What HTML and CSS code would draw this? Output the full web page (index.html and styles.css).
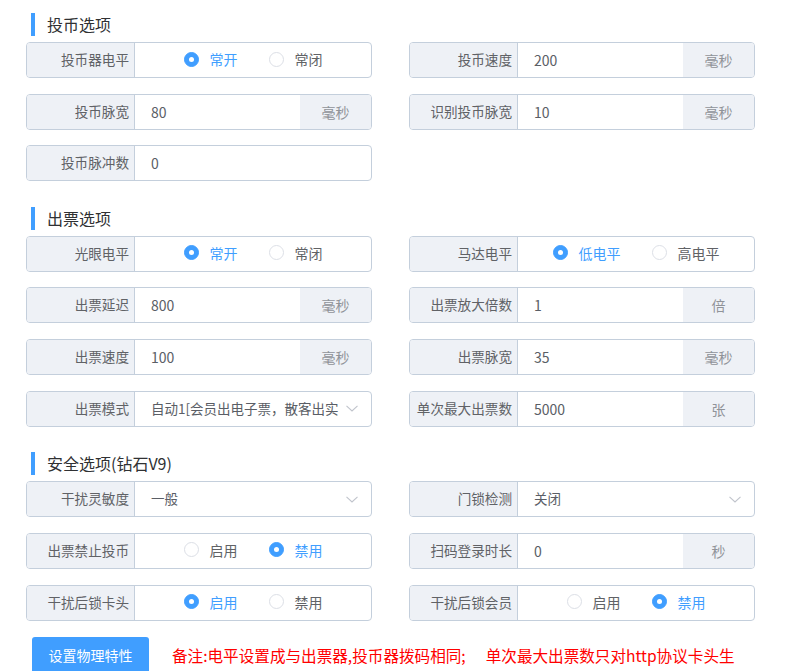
FILE: index.html
```html
<!DOCTYPE html>
<html lang="zh-CN">
<head>
<meta charset="utf-8">
<title>物理特性设置</title>
<link rel="stylesheet" href="styles.css">
</head>
<body>
<div class="page">
  <section class="group">
    <h3 class="group-title">投币选项</h3>
    <div class="grid">
      <div class="field">
        <span class="field-label">投币器电平</span>
        <div class="field-radios">
          <span class="radio is-checked"><span class="radio-dot"></span><span class="radio-text">常开</span></span>
          <span class="radio"><span class="radio-dot"></span><span class="radio-text">常闭</span></span>
        </div>
      </div>
      <div class="field">
        <span class="field-label">投币速度</span>
        <span class="field-value">200</span>
        <span class="field-suffix">毫秒</span>
      </div>
      <div class="field">
        <span class="field-label">投币脉宽</span>
        <span class="field-value">80</span>
        <span class="field-suffix">毫秒</span>
      </div>
      <div class="field">
        <span class="field-label">识别投币脉宽</span>
        <span class="field-value">10</span>
        <span class="field-suffix">毫秒</span>
      </div>
      <div class="field">
        <span class="field-label">投币脉冲数</span>
        <span class="field-value">0</span>
      </div>
    </div>
  </section>

  <section class="group">
    <h3 class="group-title">出票选项</h3>
    <div class="grid">
      <div class="field">
        <span class="field-label">光眼电平</span>
        <div class="field-radios">
          <span class="radio is-checked"><span class="radio-dot"></span><span class="radio-text">常开</span></span>
          <span class="radio"><span class="radio-dot"></span><span class="radio-text">常闭</span></span>
        </div>
      </div>
      <div class="field">
        <span class="field-label">马达电平</span>
        <div class="field-radios">
          <span class="radio is-checked"><span class="radio-dot"></span><span class="radio-text">低电平</span></span>
          <span class="radio"><span class="radio-dot"></span><span class="radio-text">高电平</span></span>
        </div>
      </div>
      <div class="field">
        <span class="field-label">出票延迟</span>
        <span class="field-value">800</span>
        <span class="field-suffix">毫秒</span>
      </div>
      <div class="field">
        <span class="field-label">出票放大倍数</span>
        <span class="field-value">1</span>
        <span class="field-suffix">倍</span>
      </div>
      <div class="field">
        <span class="field-label">出票速度</span>
        <span class="field-value">100</span>
        <span class="field-suffix">毫秒</span>
      </div>
      <div class="field">
        <span class="field-label">出票脉宽</span>
        <span class="field-value">35</span>
        <span class="field-suffix">毫秒</span>
      </div>
      <div class="field">
        <span class="field-label">出票模式</span>
        <div class="field-select">
          <span class="select-text">自动1[会员出电子票，散客出实</span>
          <svg class="select-arrow" width="12" height="7" viewBox="0 0 12 7"><path d="M0.5 0.8 L6 6 L11.5 0.8" fill="none" stroke="#c0c4cc" stroke-width="1.1"/></svg>
        </div>
      </div>
      <div class="field">
        <span class="field-label">单次最大出票数</span>
        <span class="field-value">5000</span>
        <span class="field-suffix">张</span>
      </div>
    </div>
  </section>

  <section class="group">
    <h3 class="group-title">安全选项(钻石V9)</h3>
    <div class="grid">
      <div class="field">
        <span class="field-label">干扰灵敏度</span>
        <div class="field-select">
          <span class="select-text">一般</span>
          <svg class="select-arrow" width="12" height="7" viewBox="0 0 12 7"><path d="M0.5 0.8 L6 6 L11.5 0.8" fill="none" stroke="#c0c4cc" stroke-width="1.1"/></svg>
        </div>
      </div>
      <div class="field">
        <span class="field-label">门锁检测</span>
        <div class="field-select">
          <span class="select-text">关闭</span>
          <svg class="select-arrow" width="12" height="7" viewBox="0 0 12 7"><path d="M0.5 0.8 L6 6 L11.5 0.8" fill="none" stroke="#c0c4cc" stroke-width="1.1"/></svg>
        </div>
      </div>
      <div class="field">
        <span class="field-label">出票禁止投币</span>
        <div class="field-radios">
          <span class="radio"><span class="radio-dot"></span><span class="radio-text">启用</span></span>
          <span class="radio is-checked"><span class="radio-dot"></span><span class="radio-text">禁用</span></span>
        </div>
      </div>
      <div class="field">
        <span class="field-label">扫码登录时长</span>
        <span class="field-value">0</span>
        <span class="field-suffix">秒</span>
      </div>
      <div class="field">
        <span class="field-label">干扰后锁卡头</span>
        <div class="field-radios">
          <span class="radio is-checked"><span class="radio-dot"></span><span class="radio-text">启用</span></span>
          <span class="radio"><span class="radio-dot"></span><span class="radio-text">禁用</span></span>
        </div>
      </div>
      <div class="field">
        <span class="field-label">干扰后锁会员</span>
        <div class="field-radios">
          <span class="radio"><span class="radio-dot"></span><span class="radio-text">启用</span></span>
          <span class="radio is-checked"><span class="radio-dot"></span><span class="radio-text">禁用</span></span>
        </div>
      </div>
    </div>
  </section>

  <div class="footer">
    <button class="btn-primary" type="button">设置物理特性</button>
    <p class="note"><span class="note-first">备注:电平设置成与出票器,投币器拨码相同;</span><span class="note-second">单次最大出票数只对http协议卡头生</span></p>
  </div>
</div>
</body>
</html>
```
FILE: styles.css
```css
* {
  box-sizing: border-box;
}

html, body {
  margin: 0;
  padding: 0;
  background: #ffffff;
}

body {
  font-family: "Noto Sans CJK SC", "Noto Sans", sans-serif;
  color: #606266;
  overflow: hidden;
}

.page {
  padding: 13px 0 0 26px;
  width: 787px;
}

.group {
  margin-bottom: 25.5px;
}

.group:last-of-type {
  margin-bottom: 0;
}

.group-title {
  margin: 0 0 6px 5px;
  height: 23px;
  line-height: 23px;
  border-left: 4px solid #409eff;
  padding-left: 12px;
  font-size: 16px;
  font-weight: normal;
  color: #303133;
}

.grid {
  display: grid;
  grid-template-columns: 346px 346px;
  column-gap: 37px;
  row-gap: 15.67px;
}

.field {
  display: flex;
  height: 36px;
  border: 1px solid #c4cfdc;
  border-radius: 4px;
  overflow: hidden;
  font-size: 14px;
  background: #fff;
}

.field-label {
  flex: 0 0 108px;
  background: #eef1f6;
  border-right: 1px solid #c4cfdc;
  text-align: right;
  padding-right: 5px;
  line-height: 33px;
  font-size: 13.6px;
  color: #606266;
  white-space: nowrap;
}

.field-value {
  flex: 1;
  padding-left: 16px;
  line-height: 34px;
  color: #5a5e66;
}

.field-suffix {
  flex: 0 0 71px;
  background: #eef1f6;
  text-align: center;
  line-height: 34px;
  color: #909399;
}

.field-radios {
  flex: 1;
  display: flex;
  align-items: center;
  justify-content: center;
  gap: 31px;
  padding-bottom: 2px;
}

.radio {
  display: flex;
  align-items: center;
}

.radio-dot {
  width: 15px;
  height: 15px;
  border: 1px solid #dcdfe6;
  border-radius: 50%;
  background: #fff;
  display: flex;
  align-items: center;
  justify-content: center;
}

.radio-text {
  padding-left: 11px;
  color: #606266;
}

.radio.is-checked .radio-dot {
  border-color: #409eff;
  background: #409eff;
}

.radio.is-checked .radio-dot::after {
  content: "";
  width: 5px;
  height: 5px;
  border-radius: 50%;
  background: #fff;
}

.radio.is-checked .radio-text {
  color: #409eff;
}

.field-select {
  flex: 1;
  display: flex;
  align-items: center;
  padding-left: 16px;
  padding-right: 13px;
  padding-bottom: 2px;
  min-width: 0;
}

.select-text {
  flex: 1;
  min-width: 0;
  overflow: hidden;
  white-space: nowrap;
  margin-right: 3px;
  font-size: 13.5px;
  color: #5a5e66;
}

.select-arrow {
  flex: 0 0 12px;
  margin-top: 2px;
}

.footer {
  display: flex;
  align-items: center;
  margin-top: 16px;
  padding-left: 6px;
}

.btn-primary {
  width: 117px;
  height: 40px;
  border: none;
  border-radius: 3px;
  background: #409eff;
  color: #fff;
  font-family: inherit;
  font-size: 14px;
  padding: 0 0 3px;
}

.note {
  margin: 0 0 4px 23px;
  color: #ff0000;
  font-size: 15.6px;
  white-space: nowrap;
}

.note-second {
  margin-left: 20px;
}
```
